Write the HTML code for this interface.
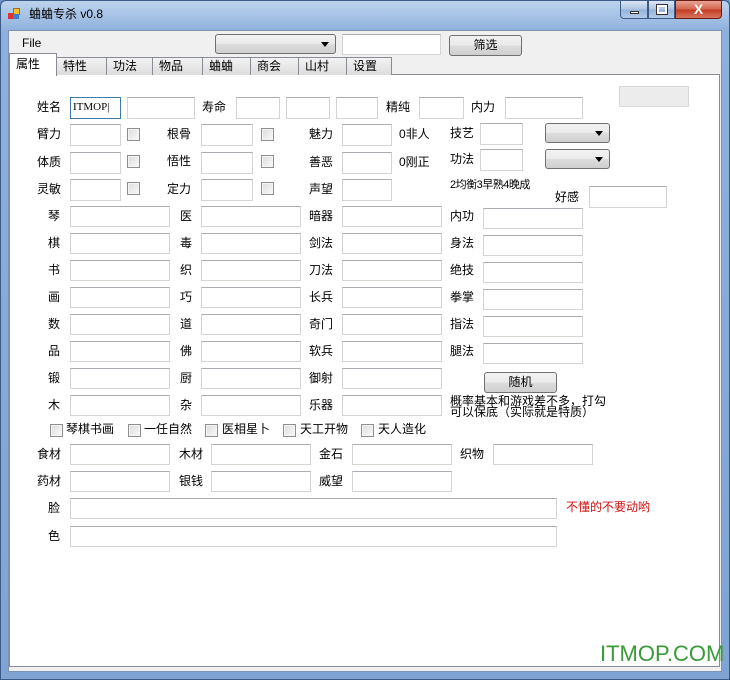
<!DOCTYPE html>
<html><head><meta charset="utf-8"><style>
*{box-sizing:border-box;margin:0;padding:0}
body{width:730px;height:680px;position:relative;overflow:hidden;background:#6b8fc4;font-family:"Liberation Sans","Noto Sans CJK SC",sans-serif;font-size:12px;color:#000}
.a{position:absolute}
.frame{left:0;top:0;width:730px;height:680px;background:linear-gradient(180deg,#bcd3ee 0,#a6c2e6 15px,#8fb0dc 30px,#7fa3d3 100%);border:1px solid #3b5a86;border-radius:6px 6px 0 0}
.client{left:8px;top:30px;width:714px;height:642px;background:#f0f0f0;border:1px solid #7d93b5}
.panel{left:9px;top:74px;width:711px;height:593px;background:#fff;border:1px solid #898c95}
.tab{top:57px;height:18px;background:linear-gradient(#f3f3f3,#dcdcdc);border:1px solid #898c95;border-bottom:none;line-height:17px;padding-left:6px}
.tin{background:#fff;border:1px solid #d4d4d4;border-top-color:#abadb3;height:22px}
.lb{line-height:14px;white-space:nowrap}
.cb{width:13px;height:13px;border:1px solid #8f8f8f;background:linear-gradient(135deg,#dcdcdc,#fafafa);box-shadow:inset 0 0 0 1px #f4f4f4}
.btn{border:1px solid #707070;border-radius:3px;background:linear-gradient(#f2f2f2 0,#ebebeb 50%,#dddddd 51%,#cfcfcf 100%);text-align:center}
.combo{border:1px solid #707070;border-radius:3px;background:linear-gradient(#f2f2f2 0,#ebebeb 50%,#dddddd 51%,#cfcfcf 100%)}
.combo:after{content:"";position:absolute;right:6px;top:7px;border-left:4px solid transparent;border-right:4px solid transparent;border-top:5px solid #000}
</style></head><body>
<div class="a frame"></div>
<div class="a" style="left:8px;top:8px;width:12px;height:12px"><div class="a" style="left:0;top:5px;width:6px;height:6px;background:#d33"></div><div class="a" style="left:5px;top:0;width:7px;height:7px;background:#f0c030;border:1px solid #a07020"></div><div class="a" style="left:5px;top:6px;width:6px;height:5px;background:#3a7fd0"></div></div>
<div class="a lb" style="left:29px;top:7px;font-size:12px">蛐蛐专杀 v0.8</div>
<div class="a" style="left:620px;top:0;width:28px;height:19px;border:1px solid #3b5a86;border-radius:0 0 0 4px;background:linear-gradient(#dbe6f4,#aec4e2 50%,#95b2d8 51%,#b3cbe9)"><div class="a" style="left:9px;top:10px;width:9px;height:3px;background:#fff;border:1px solid #333"></div></div>
<div class="a" style="left:648px;top:0;width:27px;height:19px;border:1px solid #3b5a86;background:linear-gradient(#dbe6f4,#aec4e2 50%,#95b2d8 51%,#b3cbe9)"><div class="a" style="left:8px;top:4px;width:10px;height:9px;border:2px solid #fff;outline:1px solid #333"></div></div>
<div class="a" style="left:675px;top:0;width:47px;height:19px;border:1px solid #6b1d14;border-radius:0 0 4px 0;background:linear-gradient(#e8a494,#d3624c 50%,#c43a22 51%,#d8765e);color:#fff;font-weight:bold;font-size:14px;text-align:center;line-height:17px">X</div>
<div class="a client"></div>
<div class="a lb" style="left:22px;top:36px">File</div>
<div class="a combo" style="left:215px;top:34px;width:121px;height:20px"></div>
<div class="a tin" style="left:342px;top:34px;width:99px;height:21px"></div>
<div class="a btn" style="left:449px;top:35px;width:73px;height:21px;line-height:19px">筛选</div>
<div class="a panel"></div>
<div class="a tab" style="left:56px;width:51px">特性</div>
<div class="a tab" style="left:106px;width:51px">功法</div>
<div class="a tab" style="left:152px;width:51px">物品</div>
<div class="a tab" style="left:202px;width:51px">蛐蛐</div>
<div class="a tab" style="left:250px;width:50px">商会</div>
<div class="a tab" style="left:298px;width:50px">山村</div>
<div class="a tab" style="left:346px;width:46px">设置</div>
<div class="a" style="left:9px;top:53px;width:48px;height:23px;background:#fff;border:1px solid #898c95;border-bottom:none;padding:3px 0 0 6px;line-height:14px">属性</div>
<div class="a" style="left:619px;top:86px;width:70px;height:21px;background:#ececec;border:1px solid #d8d8d8"></div>

<div class="a lb" style="left:37px;top:100px">姓名</div>
<div class="a tin" style="left:70px;top:97px;width:51px;border-color:#3d7bad;font-family:'Liberation Serif',serif;font-size:11px;padding:3px 0 0 2px">ITMOP|</div>
<div class="a tin" style="left:127px;top:97px;width:68px"></div>
<div class="a lb" style="left:202px;top:100px">寿命</div>
<div class="a tin" style="left:236px;top:97px;width:44px"></div>
<div class="a tin" style="left:286px;top:97px;width:44px"></div>
<div class="a tin" style="left:336px;top:97px;width:42px"></div>
<div class="a lb" style="left:386px;top:100px">精纯</div>
<div class="a tin" style="left:419px;top:97px;width:45px"></div>
<div class="a lb" style="left:471px;top:100px">内力</div>
<div class="a tin" style="left:505px;top:97px;width:78px"></div>

<div class="a lb" style="left:37px;top:127px">臂力</div><div class="a tin" style="left:70px;top:124px;width:51px"></div><div class="a cb" style="left:127px;top:128px"></div>
<div class="a lb" style="left:167px;top:127px">根骨</div><div class="a tin" style="left:201px;top:124px;width:52px"></div><div class="a cb" style="left:261px;top:128px"></div>
<div class="a lb" style="left:309px;top:127px">魅力</div><div class="a tin" style="left:342px;top:124px;width:50px"></div><div class="a lb" style="left:399px;top:127px">0非人</div>
<div class="a lb" style="left:450px;top:126px">技艺</div><div class="a tin" style="left:480px;top:123px;width:43px"></div><div class="a combo" style="left:545px;top:123px;width:65px;height:20px"></div>

<div class="a lb" style="left:37px;top:155px">体质</div><div class="a tin" style="left:70px;top:152px;width:51px"></div><div class="a cb" style="left:127px;top:155px"></div>
<div class="a lb" style="left:167px;top:154px">悟性</div><div class="a tin" style="left:201px;top:152px;width:52px"></div><div class="a cb" style="left:261px;top:155px"></div>
<div class="a lb" style="left:309px;top:155px">善恶</div><div class="a tin" style="left:342px;top:152px;width:50px"></div><div class="a lb" style="left:399px;top:155px">0刚正</div>
<div class="a lb" style="left:450px;top:152px">功法</div><div class="a tin" style="left:480px;top:149px;width:43px"></div><div class="a combo" style="left:545px;top:149px;width:65px;height:20px"></div>

<div class="a lb" style="left:37px;top:182px">灵敏</div><div class="a tin" style="left:70px;top:179px;width:51px"></div><div class="a cb" style="left:127px;top:182px"></div>
<div class="a lb" style="left:167px;top:182px">定力</div><div class="a tin" style="left:201px;top:179px;width:52px"></div><div class="a cb" style="left:261px;top:182px"></div>
<div class="a lb" style="left:309px;top:182px">声望</div><div class="a tin" style="left:342px;top:179px;width:50px"></div>
<div class="a lb" style="left:450px;top:178px;font-size:11px;letter-spacing:-0.5px">2均衡3早熟4晚成</div>
<div class="a lb" style="left:555px;top:190px">好感</div><div class="a tin" style="left:589px;top:186px;width:78px"></div>

<div class="a lb" style="left:48px;top:209px">琴</div><div class="a tin" style="left:70px;top:206px;width:100px;height:21px"></div><div class="a lb" style="left:180px;top:209px">医</div><div class="a tin" style="left:201px;top:206px;width:100px;height:21px"></div><div class="a lb" style="left:309px;top:209px">暗器</div><div class="a tin" style="left:342px;top:206px;width:100px;height:21px"></div><div class="a lb" style="left:450px;top:209px">内功</div><div class="a tin" style="left:483px;top:208px;width:100px;height:21px"></div>
<div class="a lb" style="left:48px;top:236px">棋</div><div class="a tin" style="left:70px;top:233px;width:100px;height:21px"></div><div class="a lb" style="left:180px;top:236px">毒</div><div class="a tin" style="left:201px;top:233px;width:100px;height:21px"></div><div class="a lb" style="left:309px;top:236px">剑法</div><div class="a tin" style="left:342px;top:233px;width:100px;height:21px"></div><div class="a lb" style="left:450px;top:236px">身法</div><div class="a tin" style="left:483px;top:235px;width:100px;height:21px"></div>
<div class="a lb" style="left:48px;top:263px">书</div><div class="a tin" style="left:70px;top:260px;width:100px;height:21px"></div><div class="a lb" style="left:180px;top:263px">织</div><div class="a tin" style="left:201px;top:260px;width:100px;height:21px"></div><div class="a lb" style="left:309px;top:263px">刀法</div><div class="a tin" style="left:342px;top:260px;width:100px;height:21px"></div><div class="a lb" style="left:450px;top:263px">绝技</div><div class="a tin" style="left:483px;top:262px;width:100px;height:21px"></div>
<div class="a lb" style="left:48px;top:290px">画</div><div class="a tin" style="left:70px;top:287px;width:100px;height:21px"></div><div class="a lb" style="left:180px;top:290px">巧</div><div class="a tin" style="left:201px;top:287px;width:100px;height:21px"></div><div class="a lb" style="left:309px;top:290px">长兵</div><div class="a tin" style="left:342px;top:287px;width:100px;height:21px"></div><div class="a lb" style="left:450px;top:290px">拳掌</div><div class="a tin" style="left:483px;top:289px;width:100px;height:21px"></div>
<div class="a lb" style="left:48px;top:317px">数</div><div class="a tin" style="left:70px;top:314px;width:100px;height:21px"></div><div class="a lb" style="left:180px;top:317px">道</div><div class="a tin" style="left:201px;top:314px;width:100px;height:21px"></div><div class="a lb" style="left:309px;top:317px">奇门</div><div class="a tin" style="left:342px;top:314px;width:100px;height:21px"></div><div class="a lb" style="left:450px;top:317px">指法</div><div class="a tin" style="left:483px;top:316px;width:100px;height:21px"></div>
<div class="a lb" style="left:48px;top:344px">品</div><div class="a tin" style="left:70px;top:341px;width:100px;height:21px"></div><div class="a lb" style="left:180px;top:344px">佛</div><div class="a tin" style="left:201px;top:341px;width:100px;height:21px"></div><div class="a lb" style="left:309px;top:344px">软兵</div><div class="a tin" style="left:342px;top:341px;width:100px;height:21px"></div><div class="a lb" style="left:450px;top:344px">腿法</div><div class="a tin" style="left:483px;top:343px;width:100px;height:21px"></div>
<div class="a lb" style="left:48px;top:371px">锻</div><div class="a tin" style="left:70px;top:368px;width:100px;height:21px"></div><div class="a lb" style="left:180px;top:371px">厨</div><div class="a tin" style="left:201px;top:368px;width:100px;height:21px"></div><div class="a lb" style="left:309px;top:371px">御射</div><div class="a tin" style="left:342px;top:368px;width:100px;height:21px"></div>
<div class="a lb" style="left:48px;top:398px">木</div><div class="a tin" style="left:70px;top:395px;width:100px;height:21px"></div><div class="a lb" style="left:180px;top:398px">杂</div><div class="a tin" style="left:201px;top:395px;width:100px;height:21px"></div><div class="a lb" style="left:309px;top:398px">乐器</div><div class="a tin" style="left:342px;top:395px;width:100px;height:21px"></div>

<div class="a btn" style="left:484px;top:372px;width:73px;height:21px;line-height:19px">随机</div>
<div class="a" style="left:450px;top:396px;line-height:11px;font-size:12px;white-space:nowrap">概率基本和游戏差不多，打勾<br>可以保底（实际就是特质）</div>

<div class="a cb" style="left:50px;top:424px"></div><div class="a lb" style="left:66px;top:422px">琴棋书画</div>
<div class="a cb" style="left:128px;top:424px"></div><div class="a lb" style="left:144px;top:422px">一任自然</div>
<div class="a cb" style="left:205px;top:424px"></div><div class="a lb" style="left:222px;top:422px">医相星卜</div>
<div class="a cb" style="left:283px;top:424px"></div><div class="a lb" style="left:300px;top:422px">天工开物</div>
<div class="a cb" style="left:361px;top:424px"></div><div class="a lb" style="left:378px;top:422px">天人造化</div>

<div class="a lb" style="left:37px;top:447px">食材</div><div class="a tin" style="left:70px;top:444px;width:100px;height:21px"></div>
<div class="a lb" style="left:179px;top:447px">木材</div><div class="a tin" style="left:211px;top:444px;width:100px;height:21px"></div>
<div class="a lb" style="left:319px;top:447px">金石</div><div class="a tin" style="left:352px;top:444px;width:100px;height:21px"></div>
<div class="a lb" style="left:460px;top:447px">织物</div><div class="a tin" style="left:493px;top:444px;width:100px;height:21px"></div>
<div class="a lb" style="left:37px;top:474px">药材</div><div class="a tin" style="left:70px;top:471px;width:100px;height:21px"></div>
<div class="a lb" style="left:179px;top:474px">银钱</div><div class="a tin" style="left:211px;top:471px;width:100px;height:21px"></div>
<div class="a lb" style="left:319px;top:474px">威望</div><div class="a tin" style="left:352px;top:471px;width:100px;height:21px"></div>
<div class="a lb" style="left:48px;top:501px">脸</div><div class="a tin" style="left:70px;top:498px;width:487px;height:21px"></div>
<div class="a lb" style="left:566px;top:500px;color:#d01010">不懂的不要动哟</div>
<div class="a lb" style="left:48px;top:529px">色</div><div class="a tin" style="left:70px;top:526px;width:487px;height:21px"></div>

<div class="a" style="left:600px;top:641px;font-size:22px;color:#3a9a3a;white-space:nowrap;line-height:26px">ITMOP.COM</div>
</body></html>
